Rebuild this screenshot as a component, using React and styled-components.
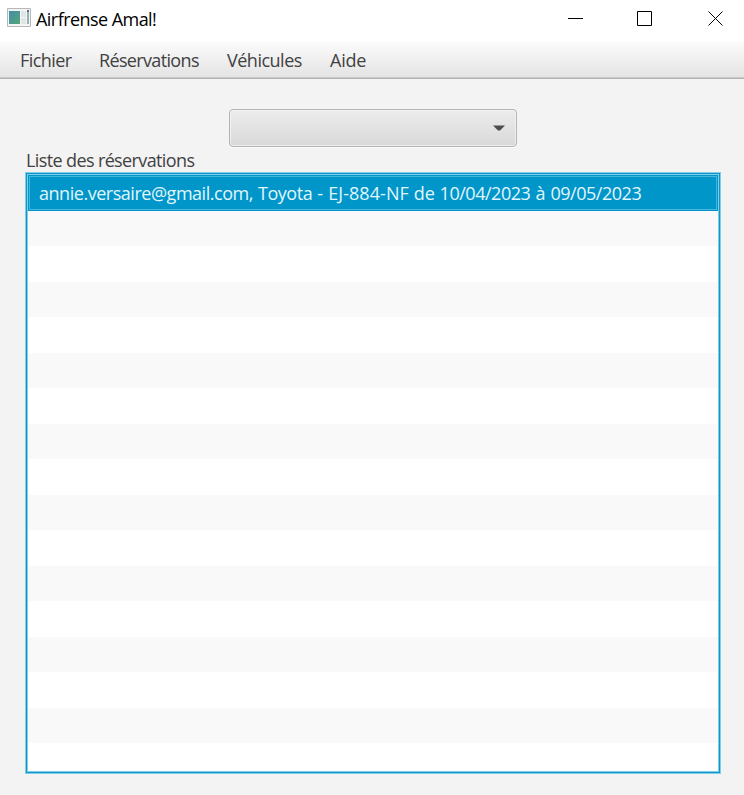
import React from "react";
import styled, { createGlobalStyle } from "styled-components";

const GlobalStyle = createGlobalStyle`
  * { box-sizing: border-box; }
  html, body { margin: 0; background: #f3f3f3; }
  body { font-family: "Open Sans", "Noto Sans", sans-serif; color: #414141; overflow: hidden; }
`;

const Window = styled.div`
  width: 744px;
  height: 795px;
  display: flex;
  flex-direction: column;
  background: #f3f3f3;
`;

const TitleBar = styled.header`
  height: 41px;
  flex: none;
  display: flex;
  align-items: flex-start;
  background: #fff;
  padding-left: 7px;
`;

const AppIcon = styled.svg`
  width: 24px;
  height: 20px;
  margin-top: 8px;
  flex: none;
`;

const Label = styled.span`
  display: block;
  white-space: pre;
  font-size: 18px;
  line-height: 24px;
  letter-spacing: ${(p) => p.$track || 0}px;
`;

const Title = styled(Label)`
  color: #000;
  margin: 7px auto 0 5px;
`;

const Controls = styled.div`
  display: flex;
  margin-top: 10px;
  gap: 54px;
  padding-right: 20px;
  svg { width: 16px; height: 16px; display: block; overflow: visible; }
`;

const MenuBar = styled.nav`
  height: 38px;
  flex: none;
  display: flex;
  align-items: flex-start;
  padding-left: 20px;
  background: linear-gradient(#fcfcfc, #e3e3e3);
  border-bottom: 1px solid #b3b3b3;
  box-shadow: inset 0 -1px #c9c9c9;
`;

const MenuItem = styled(Label)`
  width: ${(p) => p.$width}px;
  margin-top: 7px;
  flex: none;
`;

const Content = styled.main`
  flex: 1;
  min-height: 0;
  display: flex;
  flex-direction: column;
  padding: 30px 23px 21px 25px;
`;

const Combo = styled.button`
  width: 288px;
  height: 38px;
  flex: none;
  margin: 0 0 0 204px;
  padding: 0 11px;
  display: flex;
  align-items: center;
  justify-content: flex-end;
  border: 1px solid #b4b4b4;
  border-radius: 4px;
  background: linear-gradient(#ececec, #d9d9d9);
  box-shadow: inset 0 0 0 1px rgba(255, 255, 255, 0.5), 0 1px #fafafa;
  svg { width: 13px; height: 7px; display: block; }
`;

const ListLabel = styled(Label)`
  margin: 1px 0 0 1px;
`;

const ListView = styled.div`
  flex: 1;
  min-height: 0;
  display: flex;
  border: 1px solid #7dcdec;
  box-shadow: inset 0 0 0 1px #1495c4, inset 0 0 0 2px #7dcdec;
  background: #fff;
  padding: 2px;
`;

const Cells = styled.div`
  flex: 1;
  display: flex;
  flex-direction: column;
  overflow: hidden;
`;

const Cell = styled.div`
  height: 35.5px;
  flex: none;
  background: ${(p) => (p.$odd ? "#f9f9f9" : "#fff")};
`;

const SelectedCell = styled(Cell)`
  display: flex;
  gap: 5px;
  padding: 5px 0 0 10px;
  background: #0096c9;
  color: #e2f5fc;
  border: 1px solid #0096c9;
  box-shadow: inset 0 0 0 1px #45b5dc;
`;

const MENUS = [
  ["Fichier", 79, -0.55],
  ["Réservations", 128, -0.65],
  ["Véhicules", 103, -0.5],
  ["Aide", 60, -0.25],
];

const RESERVATION = [
  ["annie.versaire@gmail.com,", -0.47],
  ["Toyota", -0.45],
  ["-", 0.2],
  ["EJ-884-NF", 0.05],
  ["de", -0.2],
  ["10/04/2023", -0.47],
  ["à", 0],
  ["09/05/2023", -0.47],
];

export default function App() {
  return (
    <Window>
      <GlobalStyle />
      <TitleBar>
        <AppIcon viewBox="0 0 24 20">
          <defs>
            <linearGradient id="screen" x2="1" y2="1">
              <stop offset="0" stopColor="#468eaa" />
              <stop offset="1" stopColor="#52a577" />
            </linearGradient>
          </defs>
          <path d="M.5.5h23v18H.5z" fill="#f4f4f4" stroke="#b5b8bb" />
          <path d="M2 3h11v13H2z" fill="url(#screen)" />
          <path d="M14 3h5v6h-5zM14 10h5v6h-5z" fill="#e3e4e6" />
          <path d="M20 4h2v12h-2z" fill="#8db5b2" />
          <path d="M20 2h2v2h-2z" fill="#526d83" />
        </AppIcon>
        <Title $track={-0.55}>Airfrense Amal!</Title>
        <Controls>
          <svg viewBox="0 0 16 16"><path d="M0 8.5h15" stroke="#000" /></svg>
          <svg viewBox="0 0 16 16"><path d="M-.5 1.5h14v14h-14z" fill="none" stroke="#000" /></svg>
          <svg viewBox="0 0 16 16"><path d="M.5 1.5l14 14M14.5 1.5l-14 14" stroke="#000" /></svg>
        </Controls>
      </TitleBar>
      <MenuBar>
        {MENUS.map(([name, width, track]) => (
          <MenuItem key={name} $width={width} $track={track}>{name}</MenuItem>
        ))}
      </MenuBar>
      <Content>
        <Combo aria-label="Filtre">
          <svg viewBox="0 0 13 7"><path d="M1 .5h12l-5 5h-2z" fill="#4c4c4c" /></svg>
        </Combo>
        <ListLabel $track={-0.62}>Liste des réservations</ListLabel>
        <ListView>
          <Cells>
            <SelectedCell>
              {RESERVATION.map(([word, track]) => (
                <Label key={word} $track={track}>{word}</Label>
              ))}
            </SelectedCell>
            {Array.from({ length: 16 }, (_, i) => (
              <Cell key={i} $odd={i % 2 === 0} />
            ))}
          </Cells>
        </ListView>
      </Content>
    </Window>
  );
}
